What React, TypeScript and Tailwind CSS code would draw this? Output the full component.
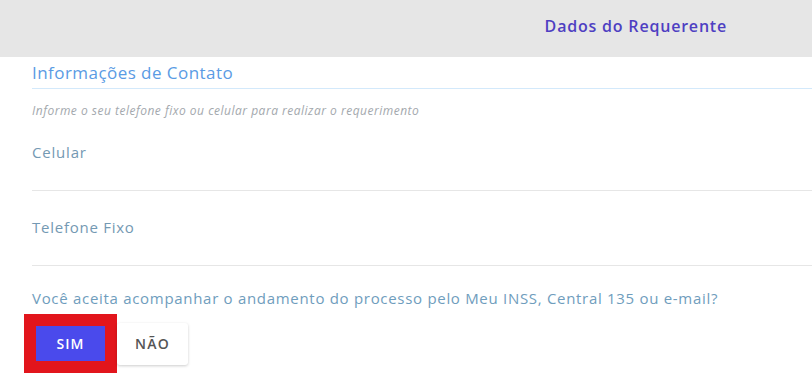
import React from "react";

export default function App() {
  const font = { fontFamily: '"Open Sans", "Noto Sans", sans-serif' };
  return (
    <div className="w-[812px] h-[375px] overflow-hidden bg-white" style={font}>
      <div className="h-[57px] bg-[#e6e6e6] flex items-center justify-end pr-[85px] pb-[5px]">
        <span className="text-[16px] font-semibold text-[#4e3fc2] tracking-[0.8px]">Dados do Requerente</span>
      </div>
      <div className="pl-[32px]">
        <div className="h-[32px] pt-[5px] border-b border-[#d3e9fb]">
          <div className="text-[17px] leading-[22px] text-[#5a9be4] tracking-[0.45px]">Informações de Contato</div>
        </div>
        <div className="mt-[14px] text-[12px] leading-[15px] italic text-[#a3a8ad] tracking-[0.5px]">
          Informe o seu telefone fixo ou celular para realizar o requerimento
        </div>
        <div className="h-[73px] pt-[24px] border-b border-[#e6e6e6]">
          <div className="text-[15px] leading-[20px] text-[#7499b3] tracking-[0.8px]">Celular</div>
        </div>
        <div className="h-[75px] pt-[26px] border-b border-[#e6e6e6]">
          <div className="text-[15px] leading-[20px] text-[#7499b3] tracking-[0.75px]">Telefone Fixo</div>
        </div>
        <div className="mt-[22px] text-[15px] leading-[20px] text-[#6f9dbd] tracking-[0.7px]">
          Você aceita acompanhar o andamento do processo pelo Meu INSS, Central 135 ou e-mail?
        </div>
      </div>
      <div className="mt-[6px] ml-[24px] flex items-center">
        <div className="border-[12px] border-[#e2151c]">
          <button className="w-[69px] h-[35px] bg-[#4a4aec] text-white text-[14px] font-semibold tracking-[1px]">SIM</button>
        </div>
        <button className="w-[71px] h-[42px] bg-white text-[#555] text-[14px] font-semibold tracking-[1.2px] rounded-[3px] shadow-[0_1px_3px_rgba(0,0,0,0.2)]">
          NÃO
        </button>
      </div>
    </div>
  );
}
